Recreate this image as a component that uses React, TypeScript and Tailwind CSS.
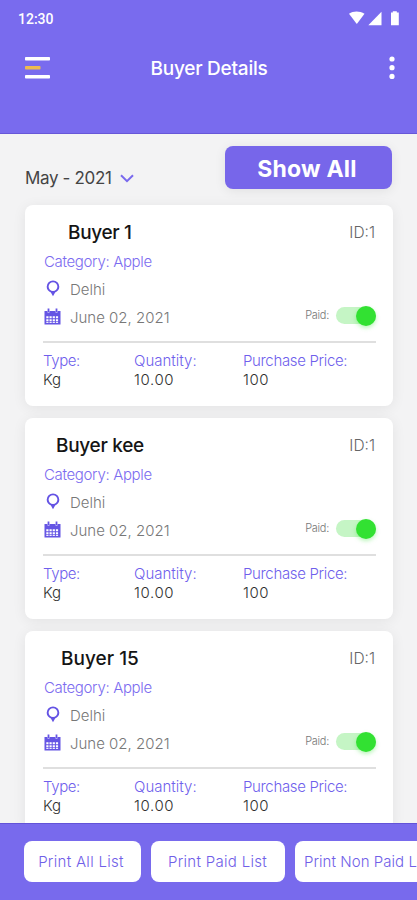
import React from 'react';

interface Buyer {
  name: string;
  indent: string;
}

const buyers: Buyer[] = [
  { name: 'Buyer 1', indent: 'pl-[25px] tracking-[-0.35px]' },
  { name: 'Buyer kee', indent: 'pl-[13px] tracking-[-0.3px]' },
  { name: 'Buyer 15', indent: 'pl-[18px] tracking-[0.02px]' },
];

const PinIcon = () => (
  <svg width="14" height="17" viewBox="0 0 14 17" className="-mt-[4px] ml-[3px] shrink-0">
    <path
      fill="#6453e4"
      fillRule="evenodd"
      d="M7 0.500a6.300 6.300 0 0 1 6.300 6.300c0 2.700-1.800 4.800-4.200 5.800L7 16.200l-2.100-3.600C2.500 11.600 0.700 9.500 0.700 6.800a6.300 6.300 0 0 1 6.300-6.300zM7 2.200a4.400 4.400 0 1 0 0 8.800a4.400 4.400 0 0 0 0-8.800z"
    />
  </svg>
);

const CalendarIcon = () => (
  <svg width="18" height="17" viewBox="0 0 18 17" className="-mt-[4px] ml-[1px] shrink-0">
    <path fill="#6555e4" d="M0.500 3h3v1.500h2V3h6v1.500h2V3h3v13.500h-16z" />
    <path stroke="#6555e4" strokeWidth="1.800" d="M4.500 0.500v3.500M12.500 0.500v3.500" />
    <path stroke="#fff" strokeWidth="2" strokeDasharray="2.200 1" d="M2.300 9.300h12.500M2.300 12.300h12.500" />
    <path stroke="#fff" strokeWidth="1" strokeDasharray="2.200 1" d="M2.300 14.400h12.500" />
  </svg>
);

const BuyerCard: React.FC<{ buyer: Buyer }> = ({ buyer }) => (
  <div className="h-[201px] shrink-0 rounded-[8px] bg-white pl-[18px] pr-[17px] pt-4 shadow-[0_2px_14px_rgba(0,0,0,0.07)]">
    <div className={`flex h-6 items-center justify-between ${buyer.indent}`}>
      <h2 className="pt-[1px] text-[19px] font-medium text-[#151515]">{buyer.name}</h2>
      <span className="pr-[1px] text-[15.500px] font-light tracking-[0px] text-[#666]">ID:1</span>
    </div>
    <div className="mt-[3px] flex h-7 items-center pl-[1px] text-[15px] font-light tracking-[-0.34px] text-[#7c6cf0]">
      Category: Apple
    </div>
    <div className="flex h-7 items-center text-[15px] font-light text-[#777]">
      <PinIcon />
      <span className="ml-[10px]">Delhi</span>
    </div>
    <div className="flex h-7 items-center text-[15px] font-light text-[#777]">
      <CalendarIcon />
      <span className="ml-[8px]">June 02, 2021</span>
      <span className="-mt-[5px] ml-auto text-[11px] tracking-[-0.3px]">Paid:</span>
      <div className="-mt-[5px] ml-[7px] flex h-[17px] w-[40px] items-center justify-end rounded-full bg-[#c5f5c5]">
        <div className="h-[20px] w-[20px] shrink-0 rounded-full bg-[#32e132] shadow-[0_2px_4px_rgba(50,225,50,0.35)]"></div>
      </div>
    </div>
    <div className="mt-[9px] h-[2px] bg-[#dfdfdf]"></div>
    <div className="mt-[8px] flex text-[15px] font-light leading-[19px] text-[#303030]">
      <div className="w-[91px]">
        <div className="tracking-[-0.4px] text-[#6f5fec]">Type:</div>
        <div>Kg</div>
      </div>
      <div className="w-[109px]">
        <div className="text-[#6f5fec]">Quantity:</div>
        <div className="tracking-[0.6px]">10.00</div>
      </div>
      <div>
        <div className="tracking-[-0.34px] text-[#6f5fec]">Purchase Price:</div>
        <div className="tracking-[0.6px]">100</div>
      </div>
    </div>
  </div>
);

export default function App() {
  return (
    <div className="flex h-[900px] w-[417px] flex-col overflow-hidden bg-[#f3f3f4] font-['Inter',sans-serif]">
      {/* Header */}
      <header className="h-[134px] shrink-0 border-b border-[#6757d8] bg-[#796bee] text-white">
        <div className="flex h-[37px] items-center justify-between pl-[18px] pr-[17px]">
          <span className="pt-[2px] font-['Roboto',sans-serif] text-[14px] font-medium">12:30</span>
          <svg width="51" height="15" viewBox="0 0 51 15" fill="#fff">
            <path d="M0 2.800C4.400-.3 10.600-.3 15.500 2.800L7.800 13z" />
            <path d="M32.500.8v13.500H19.300z" />
            <path d="M42 1.500h1.800V0.300h4v1.200h2v12.800H42z" />
          </svg>
        </div>
        <div className="flex h-[61px] items-center justify-between pl-[25px] pr-[22px]">
          <svg width="25" height="22" viewBox="0 0 25 22">
            <rect width="25" height="3.500" rx="0.800" fill="#fff" />
            <rect y="9" width="15.500" height="3.500" rx="0.800" fill="#eebb50" />
            <rect y="18" width="25" height="3.500" rx="0.800" fill="#fff" />
          </svg>
          <h1 className="mr-[21px] pt-[4px] text-[19px] font-medium tracking-[-0.24px]">Buyer Details</h1>
          <svg width="6" height="24" viewBox="0 0 6 24" fill="#fff">
            <circle cx="3" cy="3" r="2.600" />
            <circle cx="3" cy="11.700" r="2.600" />
            <circle cx="3" cy="20.400" r="2.600" />
          </svg>
        </div>
      </header>

      {/* Filter row */}
      <div className="flex h-[71px] shrink-0 items-start justify-between pl-[25px] pr-[25px] pt-[12px]">
        <div className="flex h-[64px] items-center">
          <span className="pt-[2px] text-[17px] font-normal tracking-[-0.35px] text-[#444]">May - 2021</span>
          <svg width="14" height="9" viewBox="0 0 14 9" fill="none" className="ml-[9px]">
            <path d="M1 1.200l6 6 6-6" stroke="#7969ee" strokeWidth="2" />
          </svg>
        </div>
        <button className="h-[43px] w-[167px] rounded-[8px] bg-[#7766ea] pr-[3px] pt-[4px] text-[23px] font-bold tracking-[0.2px] text-white shadow-[0_2px_12px_rgba(0,0,0,0.08)]">
          Show All
        </button>
      </div>

      {/* Buyers */}
      <main className="flex min-h-0 flex-1 flex-col gap-[12px] pl-[25px] pr-[24px] [overflow-clip-margin:24px] [overflow:clip]">
        {buyers.map((buyer) => (
          <BuyerCard key={buyer.name} buyer={buyer} />
        ))}
      </main>

      {/* Print actions */}
      <footer className="relative flex h-[77px] shrink-0 gap-[10px] overflow-hidden border-t border-[#6353d8] bg-[#786aed] pl-[24px] pt-[17px] text-[15px] font-light tracking-[0.3px] text-[#7060e8]">
        <button className="h-[41px] w-[117px] shrink-0 whitespace-nowrap rounded-[8px] bg-white pr-[3px] pt-[2px]">Print All List</button>
        <button className="h-[41px] w-[134px] shrink-0 whitespace-nowrap rounded-[8px] bg-white pr-[1px] pt-[2px]">Print Paid List</button>
        <button className="h-[41px] w-[150px] shrink-0 whitespace-nowrap rounded-[8px] bg-white pl-[9px] pt-[2px] text-left tracking-[0.05px]">
          Print Non Paid List
        </button>
      </footer>
    </div>
  );
}
